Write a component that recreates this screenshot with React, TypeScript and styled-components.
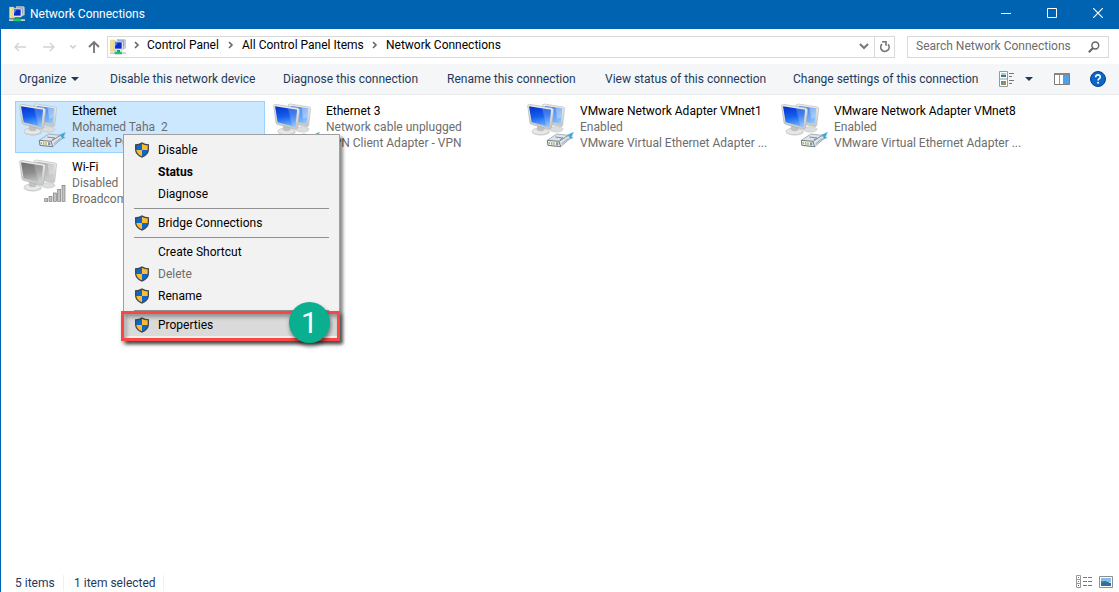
import React from "react";
import styled, { createGlobalStyle, css } from "styled-components";

const GlobalStyle = createGlobalStyle`
  * { box-sizing: border-box; }
  html, body, #root { height: 100%; }
  body {
    margin: 0;
    background: #fff;
    font-family: Roboto, "Open Sans", sans-serif;
    font-size: 12px;
    line-height: 16px;
    color: #000;
  }
  button, input {
    font: inherit;
    color: inherit;
    margin: 0;
    padding: 0;
    border: 0;
    background: none;
  }
  svg { display: block; flex: none; }
`;

const Window = styled.div`
  min-height: 100%;
  display: flex;
  flex-direction: column;
  border-left: 1px solid #0063b1;
  white-space: nowrap;
`;

const TitleBar = styled.header`
  height: 29px;
  display: flex;
  align-items: center;
  padding: 0 0 2px 8px;
  background: #0063b1;
  color: #fff;
`;

const Title = styled.h1`
  flex: 1;
  margin: 0;
  padding-left: 5px;
  font-size: 12px;
  font-weight: 400;
`;

const CaptionButton = styled.button`
  width: 46px;
  height: 27px;
  padding: 0 0 1px 4px;
  display: flex;
  align-items: center;
  justify-content: center;
`;

const AddressRow = styled.nav`
  height: 35px;
  display: flex;
  align-items: center;
  padding: 0 10px 0 11px;
`;

const NavButton = styled.button<{ $width: number; $inset?: number }>`
  width: ${(p) => p.$width}px;
  height: 22px;
  padding-left: ${(p) => p.$inset ?? 0}px;
  display: flex;
  align-items: center;
  justify-content: center;
`;

const AddressBox = styled.div`
  flex: 1;
  height: 22px;
  min-width: 0;
  margin-right: 12px;
  display: flex;
  align-items: center;
  border: 1px solid #d9d9d9;
  padding-left: 2px;
`;

const Crumbs = styled.div`
  flex: 1;
  min-width: 0;
  display: flex;
  align-items: center;
  padding-bottom: 3px;
`;

const Crumb = styled.a<{ $width: number }>`
  width: ${(p) => p.$width}px;
  color: #000;
  text-decoration: none;
`;

const ChevronCell = styled.span<{ $width?: number }>`
  width: ${(p) => p.$width ?? 23}px;
  display: flex;
  justify-content: center;
`;

const BoxButton = styled.button<{ $divided?: boolean }>`
  width: 20px;
  height: 20px;
  display: flex;
  align-items: center;
  justify-content: center;
  border-left: ${(p) => (p.$divided ? "1px solid #d9d9d9" : "0")};
`;

const SearchBox = styled.label`
  width: 202px;
  height: 22px;
  display: flex;
  align-items: center;
  border: 1px solid #d9d9d9;
  padding: 0 8px;
`;

const SearchInput = styled.input`
  flex: 1;
  min-width: 0;
  outline: none;
  height: 18px;
  padding-bottom: 2px;
  &::placeholder { color: #6d6d6d; opacity: 1; }
`;

const CommandBar = styled.div`
  height: 31px;
  display: flex;
  align-items: center;
  padding: 0 13px 0 18px;
  background: #f5f6f7;
  border-bottom: 1px solid #e8e9ea;
  color: #1e395b;
`;

const Commands = styled.div`
  display: flex;
  gap: 30px;
`;

const Command = styled.button<{ $width: number }>`
  width: ${(p) => p.$width}px;
  display: flex;
  align-items: center;
  gap: 5px;
  text-align: left;
`;

const ViewTools = styled.div`
  margin-left: auto;
  display: flex;
  align-items: center;
`;

const ToolButton = styled.button<{ $gap?: number }>`
  margin-left: ${(p) => p.$gap ?? 0}px;
`;

const Content = styled.main`
  position: relative;
  flex: 1;
  padding: 6px 14px;
`;

const Tiles = styled.ul`
  list-style: none;
  margin: 0;
  padding: 0;
  display: grid;
  grid-template-columns: repeat(auto-fill, 250px);
  gap: 4px;
`;

const Tile = styled.li<{ $selected?: boolean }>`
  height: 52px;
  display: flex;
  gap: 6px;
  padding: 1px 0 0 2px;
  border: 1px solid transparent;
  ${(p) =>
    p.$selected &&
    css`
      background: #cce8ff;
      border-color: #99d1ff;
    `}
`;

const TileText = styled.div`
  min-width: 0;
  overflow: hidden;
`;

const TileLine = styled.div<{ $muted?: boolean }>`
  overflow: hidden;
  text-overflow: ellipsis;
  white-space: pre;
  color: ${(p) => (p.$muted ? "#6d6d6d" : "#000")};
`;

const Menu = styled.div`
  position: absolute;
  left: 122px;
  top: 39px;
  width: 217px;
  padding: 4px 2px;
  background: #f2f2f2;
  border: 1px solid #a0a0a0;
  box-shadow: 3px 3px 3px rgba(0, 0, 0, 0.45);
`;

const MenuItem = styled.button<{ $bold?: boolean; $active?: boolean }>`
  width: 100%;
  height: 22px;
  display: flex;
  align-items: center;
  padding-left: 8px;
  text-align: left;
  font-weight: ${(p) => (p.$bold ? 700 : 400)};
  background: ${(p) => (p.$active ? "#dadada" : "transparent")};
  &:disabled { color: #6d6d6d; }
`;

const IconSlot = styled.span`
  width: 24px;
  flex: none;
`;

const MenuRule = styled.hr`
  height: 1px;
  margin: 3px 8px;
  border: 0;
  background: #919191;
`;

const Highlight = styled.div`
  position: absolute;
  left: -3px;
  right: -1px;
  bottom: -1px;
  height: 30px;
  border: 3px solid #fb4646;
  box-shadow: 2px 3px 4px rgba(0, 0, 0, 0.5), inset 2px 3px 4px rgba(0, 0, 0, 0.35);
  pointer-events: none;
`;

const StepBadge = styled.div`
  position: absolute;
  right: 9px;
  bottom: -3px;
  width: 41px;
  height: 41px;
  border-radius: 50%;
  display: flex;
  align-items: center;
  justify-content: center;
  background: #0aaf90;
  color: #fff;
  font-size: 30px;
  line-height: 40px;
  box-shadow: 1px 3px 4px rgba(0, 0, 0, 0.5);
`;

const StatusBar = styled.footer`
  height: 20px;
  display: flex;
  align-items: center;
  padding: 1px 6px 0 14px;
  color: #1e395b;
`;

const StatusCell = styled.span<{ $width: number }>`
  width: ${(p) => p.$width}px;
  margin-right: 10px;
  border-right: 1px solid #f0f0f0;
`;

const StatusTools = styled.div`
  margin-left: auto;
  padding-bottom: 2px;
  display: flex;
  gap: 7px;
`;

const NetworkIcon = () => (
  <svg width="16" height="16" viewBox="0 0 48 48" aria-hidden="true">
    <path d="M1 3h13l3 4v30H1z" fill="#f7e08a" stroke="#d9b84e" />
    <path d="M21 1h22l4 3v23l-6 3H21z" fill="#c4ccd6" stroke="#8f9aaa" />
    <path d="M24 4h18v18H24z" fill="#8fa6c8" />
    <path d="M12 7h24l3 3v21l-4 3H12z" fill="#e9edf3" stroke="#8b97a8" />
    <path d="M15 10h20v19H15z" fill="#0c2cc4" />
    <path d="M15 10h9l-9 13z" fill="#4d86f4" />
    <path d="M21 33h9v5h6v8H14v-8h7z" fill="#19a55c" />
    <path d="M0 40h14v5H0zM36 40h12v5H36z" fill="#cdd1d4" />
    <path d="M14 39h22v6H14z" fill="#1fc46c" />
  </svg>
);

type MonitorKind = "wired" | "wifi";

const AdapterIcon = ({ kind, id }: { kind: MonitorKind; id: string }) => {
  const off = kind === "wifi";
  return (
    <svg width="48" height="48" viewBox="0 0 144 144" aria-hidden="true">
      <defs>
        <linearGradient id={id + "s"} x1="0.3" y1="0" x2="0.5" y2="1">
          <stop offset="0" stopColor={off ? "#727272" : "#0535cc"} />
          <stop offset="0.5" stopColor={off ? "#8d8d8d" : "#1560ee"} />
          <stop offset="1" stopColor={off ? "#c4c4c4" : "#6db4ff"} />
        </linearGradient>
        <linearGradient id={id + "b"} x1="0" y1="0" x2="1" y2="1">
          <stop offset="0" stopColor={off ? "#a0a0a0" : "#1c68ea"} />
          <stop offset="1" stopColor={off ? "#d4d4d4" : "#9fd0ff"} />
        </linearGradient>
        <linearGradient id={id + "f"} x1="0" y1="0" x2="0" y2="1">
          <stop offset="0" stopColor="#efefec" />
          <stop offset="1" stopColor="#c3c5c6" />
        </linearGradient>
      </defs>
      <ellipse cx="91" cy="79" rx="20" ry="8" fill="#dcdddd" stroke="#c4c6c7" strokeWidth="2" />
      <path d="M49 5L55 3L113 12L116 15L110 68L105 71L68 63z" fill={`url(#${id}f)`} stroke="#bdbfc0" strokeWidth="2" />
      <path d="M56 9L109 16L104 62L72 56z" fill={`url(#${id}b)`} />
      <path d="M88 13L109 16L106 42L94 48z" fill="#fff" opacity="0.3" />
      <ellipse cx="45" cy="87" rx="27" ry="11" fill="#9fa2a4" opacity="0.35" />
      <ellipse cx="43" cy="85" rx="25" ry="10" fill="#e7e7e6" stroke="#bcbebf" strokeWidth="2" />
      <path d="M34 66L56 73L55 82Q43 88 32 80z" fill="#bfc1c2" />
      <path d="M5 7L10 4L79 15L83 20L77 74L71 79L16 64L12 60z" fill={`url(#${id}f)`} stroke="#b0b2b3" strokeWidth="2" />
      <path d="M9 10L75 20L70 72L17 58z" fill={`url(#${id}s)`} />
      <path d="M48 16L75 20L70 72L61 69z" fill="#fff" opacity="0.2" />
      {kind === "wifi" ? (
        <g fill="#c0c0c0" stroke="#7c7c7c" strokeWidth="2">
          <rect x="80" y="119" width="9" height="8" />
          <rect x="93" y="112" width="9" height="15" />
          <rect x="106" y="102" width="9" height="25" />
          <rect x="119" y="91" width="9" height="36" />
          <rect x="132" y="79" width="9" height="48" />
        </g>
      ) : (
        <g strokeLinejoin="round">
          <path d="M112 101L143 87L137 101L142 104L124 112z" fill="#39a8d9" stroke="#8bd0ec" strokeWidth="1" />
          <path d="M64 112L92 93L127 97L133 106L104 131L66 127z" fill="#dde3e8" stroke="#8593a0" strokeWidth="2" />
          <path d="M64 112L99 115L104 131L66 127z" fill="#f0f2f4" stroke="#6f7f8e" strokeWidth="3" />
          <path d="M99 115L127 97M88 102L111 105L102 111" fill="none" stroke="#7f8f9e" strokeWidth="3" />
          <path d="M108 122L128 106" stroke="#a9b8c6" strokeWidth="4" />
          <path d="M70 117v7M77 117v8M84 118v8" stroke="#c2ad4e" strokeWidth="4" />
          <path d="M90 118h7v9h-7z" fill="#8694a1" />
        </g>
      )}
    </svg>
  );
};

const ShieldIcon = () => (
  <svg width="16" height="16" viewBox="0 0 48 48" aria-hidden="true">
    <path d="M24 1C18 5 11 7 3 7v14c0 13 8 21 21 26 13-5 21-13 21-26V7C37 7 30 5 24 1z" fill="#41474e" />
    <path d="M24 5C19 8 13 10 7 10v14h17z" fill="#0b67cb" />
    <path d="M24 5c5 3 11 5 17 5v14H24z" fill="#fdbb30" />
    <path d="M7 24h17v19C14 39 8 33 7 24z" fill="#fdbb30" />
    <path d="M41 24H24v19c10-4 16-10 17-19z" fill="#0b67cb" />
  </svg>
);

const Chevron = () => (
  <svg width="6" height="8" viewBox="0 0 6 8" aria-hidden="true">
    <path d="M1 1l3 3-3 3" fill="none" stroke="#666" strokeWidth="1.6" />
  </svg>
);

const Caret = () => (
  <svg width="8" height="4" viewBox="0 0 8 4" aria-hidden="true">
    <path d="M0 0h8L4 4z" fill="#1e395b" />
  </svg>
);

const commands = [
  { label: "Disable this network device", width: 143 },
  { label: "Diagnose this connection", width: 134 },
  { label: "Rename this connection", width: 128 },
  { label: "View status of this connection", width: 158 },
  { label: "Change settings of this connection", width: 184 },
];

const adapters: { name: string; status: string; device: string; kind: MonitorKind; selected?: boolean }[] = [
  { name: "Ethernet", status: "Mohamed Taha  2", device: "Realtek PCIe", kind: "wired", selected: true },
  { name: "Ethernet 3", status: "Network cable unplugged", device: "VPN Client Adapter - VPN", kind: "wired" },
  { name: "VMware Network Adapter VMnet1", status: "Enabled", device: "VMware Virtual Ethernet Adapter ...", kind: "wired" },
  { name: "VMware Network Adapter VMnet8", status: "Enabled", device: "VMware Virtual Ethernet Adapter ...", kind: "wired" },
  { name: "Wi-Fi", status: "Disabled", device: "Broadcom", kind: "wifi" },
];

export default function App() {
  return (
    <>
      <GlobalStyle />
      <Window>
        <TitleBar>
          <NetworkIcon />
          <Title>Network Connections</Title>
          <CaptionButton aria-label="Minimize">
            <svg width="10" height="10" viewBox="0 0 10 10"><path d="M0 5.5h10" stroke="#fff" /></svg>
          </CaptionButton>
          <CaptionButton aria-label="Maximize">
            <svg width="10" height="10" viewBox="0 0 10 10"><path d="M.5.5h9v9h-9z" fill="none" stroke="#fff" /></svg>
          </CaptionButton>
          <CaptionButton aria-label="Close">
            <svg width="10" height="10" viewBox="0 0 10 10"><path d="M0 0l10 10M10 0L0 10" stroke="#fff" strokeWidth="1.2" /></svg>
          </CaptionButton>
        </TitleBar>

        <AddressRow>
          <NavButton $width={16} aria-label="Back">
            <svg width="12" height="10" viewBox="0 0 12 10"><path d="M12 5H1M5 1L1 5l4 4" fill="none" stroke="#d4d4d4" strokeWidth="1.5" /></svg>
          </NavButton>
          <NavButton $width={42} aria-label="Forward">
            <svg width="12" height="10" viewBox="0 0 12 10"><path d="M0 5h11M7 1l4 4-4 4" fill="none" stroke="#d4d4d4" strokeWidth="1.5" /></svg>
          </NavButton>
          <NavButton $width={6} aria-label="Recent locations">
            <svg width="6" height="4" viewBox="0 0 6 4"><path d="M0 0l3 3 3-3" fill="none" stroke="#ccc" strokeWidth="1.4" /></svg>
          </NavButton>
          <NavButton $width={31} $inset={4} aria-label="Up">
            <svg width="12" height="12" viewBox="0 0 12 12"><path d="M6 12V1M1 6l5-5 5 5" fill="none" stroke="#757575" strokeWidth="1.8" /></svg>
          </NavButton>
          <AddressBox>
            <NetworkIcon />
            <Crumbs>
              <ChevronCell $width={21}><Chevron /></ChevronCell>
              <Crumb href="#" $width={72}>Control Panel</Crumb>
              <ChevronCell><Chevron /></ChevronCell>
              <Crumb href="#" $width={121}>All Control Panel Items</Crumb>
              <ChevronCell><Chevron /></ChevronCell>
              <Crumb href="#" $width={115}>Network Connections</Crumb>
            </Crumbs>
            <BoxButton aria-label="Previous locations">
              <svg width="10" height="7" viewBox="0 0 10 7"><path d="M1 1l4 4 4-4" fill="none" stroke="#777" strokeWidth="2" /></svg>
            </BoxButton>
            <BoxButton $divided aria-label="Refresh">
              <svg width="12" height="12" viewBox="0 0 12 12">
                <path d="M3 3.2A4.2 4.2 0 1 0 9 3.3" fill="none" stroke="#757575" strokeWidth="1.7" />
                <path d="M3 .8h4v4" fill="none" stroke="#757575" strokeWidth="1.6" />
              </svg>
            </BoxButton>
          </AddressBox>
          <SearchBox>
            <SearchInput placeholder="Search Network Connections" aria-label="Search Network Connections" />
            <svg width="12" height="12" viewBox="0 0 12 12" aria-hidden="true">
              <circle cx="7.3" cy="4.5" r="3.4" fill="none" stroke="#666" strokeWidth="1.5" />
              <path d="M5 7L.8 11.2" stroke="#666" strokeWidth="2" />
            </svg>
          </SearchBox>
        </AddressRow>

        <CommandBar>
          <Commands>
            <Command $width={61}>Organize <Caret /></Command>
            {commands.map((c) => (
              <Command key={c.label} $width={c.width}>{c.label}</Command>
            ))}
          </Commands>
          <ViewTools>
            <ToolButton aria-label="Change your view">
              <svg width="16" height="16" viewBox="0 0 16 16">
                <path d="M.5.5h8v15h-8zM.5 8h8" fill="#fff" stroke="#999" />
                <path d="M2 2h5v2H2z" fill="#9fcdf4" /><path d="M2 4h5v2H2z" fill="#3b7d72" />
                <path d="M2 10h5v4H2z" fill="#68a846" /><path d="M2 10h2v2H2z" fill="#3d91d7" /><path d="M4 11h3v2H4z" fill="#e4733a" />
                <path d="M10 2.5h5M10 5.5h3M10 9.5h5M10 12.5h3" stroke="#777" />
              </svg>
            </ToolButton>
            <ToolButton $gap={10} aria-label="More view options"><Caret /></ToolButton>
            <ToolButton $gap={21} aria-label="Show the preview pane">
              <svg width="16" height="12" viewBox="0 0 16 12">
                <path d="M.5.5h15v11H.5z" fill="#fff" stroke="#7b7b7b" />
                <path d="M0 0h16v2H0z" fill="#858585" />
                <path d="M5.5 2v9" stroke="#999" />
                <path d="M9 2h6v9H9z" fill="#4da0ea" />
              </svg>
            </ToolButton>
            <ToolButton $gap={20} aria-label="Help">
              <svg width="16" height="16" viewBox="0 0 16 16">
                <circle cx="8" cy="8" r="7.5" fill="#0a67c8" stroke="#063f86" />
                <path d="M5.7 6.2C5.6 3.1 10.4 3.1 10.3 6c0 1.7-2.2 1.7-2.2 3.6" fill="none" stroke="#fff" strokeWidth="1.6" />
                <circle cx="8.1" cy="11.8" r="1" fill="#fff" />
              </svg>
            </ToolButton>
          </ViewTools>
        </CommandBar>

        <Content>
          <Tiles>
            {adapters.map((a, i) => (
              <Tile key={a.name} $selected={a.selected}>
                <AdapterIcon kind={a.kind} id={"a" + i} />
                <TileText>
                  <TileLine>{a.name}</TileLine>
                  <TileLine $muted>{a.status}</TileLine>
                  <TileLine $muted>{a.device}</TileLine>
                </TileText>
              </Tile>
            ))}
          </Tiles>
          <Menu role="menu">
            <MenuItem role="menuitem"><IconSlot><ShieldIcon /></IconSlot>Disable</MenuItem>
            <MenuItem role="menuitem" $bold><IconSlot />Status</MenuItem>
            <MenuItem role="menuitem"><IconSlot />Diagnose</MenuItem>
            <MenuRule />
            <MenuItem role="menuitem"><IconSlot><ShieldIcon /></IconSlot>Bridge Connections</MenuItem>
            <MenuRule />
            <MenuItem role="menuitem"><IconSlot />Create Shortcut</MenuItem>
            <MenuItem role="menuitem" disabled><IconSlot><ShieldIcon /></IconSlot>Delete</MenuItem>
            <MenuItem role="menuitem"><IconSlot><ShieldIcon /></IconSlot>Rename</MenuItem>
            <MenuRule />
            <MenuItem role="menuitem" $active><IconSlot><ShieldIcon /></IconSlot>Properties</MenuItem>
            <Highlight />
            <StepBadge>1</StepBadge>
          </Menu>
        </Content>

        <StatusBar>
          <StatusCell $width={49}>5 items</StatusCell>
          <StatusCell $width={90}>1 item selected</StatusCell>
          <StatusTools>
            <button aria-label="Details view">
              <svg width="16" height="13" viewBox="0 0 16 13">
                <path d="M.5.5h4v12h-4zM.5 4.5h4M.5 8.5h4" fill="#fff" stroke="#999" />
                <path d="M2 2h1v1H2z" fill="#3a9a4a" /><path d="M2 6h1v1H2z" fill="#2b87e0" /><path d="M2 10h1v1H2z" fill="#d8362a" />
                <path d="M7 2.5h4M12 2.5h4M7 6.5h4M12 6.5h4M7 10.5h4M12 10.5h4" stroke="#777" />
              </svg>
            </button>
            <button aria-label="Large icons view">
              <svg width="14" height="12" viewBox="0 0 14 12">
                <path d="M.5.5h13v11H.5z" fill="#fff" stroke="#8f8f8f" />
                <path d="M2 2h10v4H2z" fill="#86bdee" /><path d="M2 6l4-1 6 2v3H2z" fill="#2f6ea4" /><path d="M2 5l4 1-1 1H2z" fill="#3d8264" />
              </svg>
            </button>
          </StatusTools>
        </StatusBar>
      </Window>
    </>
  );
}
